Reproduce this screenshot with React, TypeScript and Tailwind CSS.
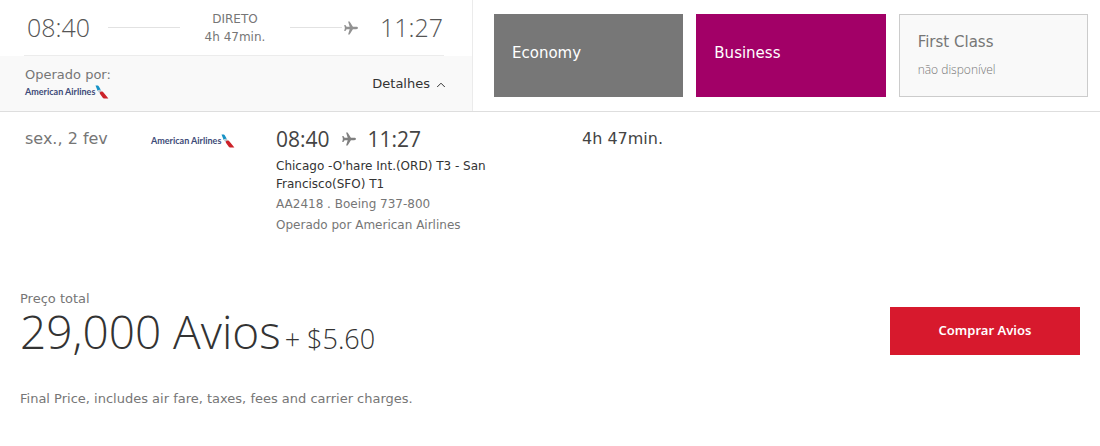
import { useState } from 'react';

const bodyFont = "font-['DejaVu_Sans',Verdana,sans-serif]";
const displayFont = "font-['Open_Sans',sans-serif]";

const flight = {
  date: 'sex., 2 fev',
  departure: '08:40',
  arrival: '11:27',
  duration: '4h 47min.',
  route: "Chicago -O'hare Int.(ORD) T3 - San Francisco(SFO) T1",
  aircraft: 'AA2418 . Boeing 737-800',
  operator: 'Operado por American Airlines',
};

function PlaneIcon({ className }: { className: string }) {
  return (
    <svg viewBox="0 0 16 16" className={`h-4 w-4 ${className}`} fill="currentColor" aria-hidden="true">
      <path d="M15 8c0 .7-.8 1.2-1.8 1.2H9.9L6.6 14.4H5.1l1.6-5.2H3.6L2.4 11H1.2L1.9 8 1.2 5h1.2l1.2 1.8h3.1L5.1 1.6h1.5l3.3 5.2h3.3C14.2 6.8 15 7.3 15 8z" />
    </svg>
  );
}

function AirlineLogo() {
  return (
    <span className="flex items-center font-[Lato,sans-serif] text-[9px] leading-4 font-bold whitespace-nowrap text-[#3d4b78]">
      American Airlines
      <svg viewBox="0 0 14 14" className="h-[14px] w-[14px]" aria-hidden="true">
        <path d="M0.5 0.5h1.8c.8 0 1.2.3 1.6 1l2 3.4c-1.5-.2-2.6.2-3.2 1z" fill="#1792c6" />
        <path d="M2.9 6.1c.7-.9 1.8-1.2 3-1.1l.8 1.3-1.9 2.3z" fill="#b9c3cb" />
        <path d="M4.9 8.7c-.2-1.3.7-2.3 2.2-2.1.6.1 1 .4 1.4 1l4.9 6H9.6c-1 0-1.5-.4-2-1.1z" fill="#cc2229" />
      </svg>
    </span>
  );
}

interface CabinButtonProps {
  name: string;
  className: string;
}

function CabinButton({ name, className }: CabinButtonProps) {
  return (
    <button type="button" className={`px-[18px] pb-1 text-left text-[15px] text-white ${className}`}>
      {name}
    </button>
  );
}

export default function App() {
  const [open, setOpen] = useState(true);

  return (
    <main className={`bg-white text-[#767676] ${bodyFont}`}>
      <section className="flex border-b border-[#dedede]">
        <div className="w-[473px] shrink-0 border-r border-[#ebebeb]">
          <div className="mr-7 ml-6 flex h-14 items-center border-b border-[#ececec] pr-px pl-[3px]">
            <span className={`${displayFont} text-[25px] font-light text-[#555]`}>{flight.departure}</span>
            <span className="ml-[18px] h-px w-[72px] bg-[#e2e2e2]" />
            <p className="flex-1 text-center text-[12px] leading-[18px]">
              DIRETO
              <br />
              {flight.duration}
            </p>
            <span className="h-px w-[52px] bg-[#e2e2e2]" />
            <PlaneIcon className="mr-[21px] ml-px text-[#929292]" />
            <span className={`${displayFont} text-[25px] font-light text-[#555]`}>{flight.arrival}</span>
          </div>
          <div className="flex h-[55px] items-center justify-between bg-[#f9f9f9] pr-[26px] pl-[25px]">
            <div className="pb-0.5">
              <p className="text-[13px] leading-[18px]">Operado por:</p>
              <AirlineLogo />
            </div>
            <button
              type="button"
              aria-expanded={open}
              onClick={() => setOpen(!open)}
              className="flex items-center gap-1.5 text-[13px] text-[#333]"
            >
              Detalhes
              <svg viewBox="0 0 10 6" className={`mt-0.5 h-1.5 w-2.5 ${open ? '' : 'rotate-180'}`} fill="none" stroke="currentColor" aria-hidden="true">
                <path d="M1.2 5 5 1.2 8.8 5" />
              </svg>
            </button>
          </div>
        </div>

        <div className="grid flex-1 grid-cols-3 gap-[13px] py-[14px] pr-3 pl-[21px]">
          <CabinButton name="Economy" className="bg-[#777]" />
          <CabinButton name="Business" className="bg-[#a20067]" />
          <button type="button" disabled className="border border-[#ccc] bg-[#f9f9f9] px-[18px] text-left">
            <span className="block text-[15px] leading-7">First Class</span>
            <span className={`${displayFont} block text-[12px] leading-7 font-light`}>não disponível</span>
          </button>
        </div>
      </section>

      {open ? (
        <section className="flex items-start pt-[13px] pl-[25px]">
          <p className="w-[126px] text-[16px] leading-7">{flight.date}</p>
          <div className="w-[125px] pt-2">
            <AirlineLogo />
          </div>
          <div className="w-[306px]">
            <div className={`flex items-center gap-[11px] ${displayFont} text-[21px] leading-7 text-[#444]`}>
              {flight.departure}
              <PlaneIcon className="text-[#808080]" />
              {flight.arrival}
            </div>
            <p className="w-[230px] pt-1 pb-px text-[12px] leading-[18px] text-[#333]">{flight.route}</p>
            <p className="text-[12px] leading-[21px]">{flight.aircraft}</p>
            <p className="text-[12px] leading-[21px]">{flight.operator}</p>
          </div>
          <p className="text-[16px] leading-7 text-[#444]">{flight.duration}</p>
        </section>
      ) : null}

      <section className="flex items-end justify-between px-5 pt-[55px]">
        <div>
          <p className="text-[13px] leading-4">Preço total</p>
          <p className={`${displayFont} text-[46px] leading-12 font-light text-[#333]`}>
            29,000 Avios <span className="-ml-2 text-[27px]">+ $5.60</span>
          </p>
        </div>
        <button type="button" className="mb-2 h-12 w-[190px] bg-[#d7192d] font-['Noto_Sans',sans-serif] text-[13px] font-semibold text-white">
          Comprar Avios
        </button>
      </section>
      <p className="px-5 pt-7 pb-9 text-[13px] leading-4">Final Price, includes air fare, taxes, fees and carrier charges.</p>
    </main>
  );
}
